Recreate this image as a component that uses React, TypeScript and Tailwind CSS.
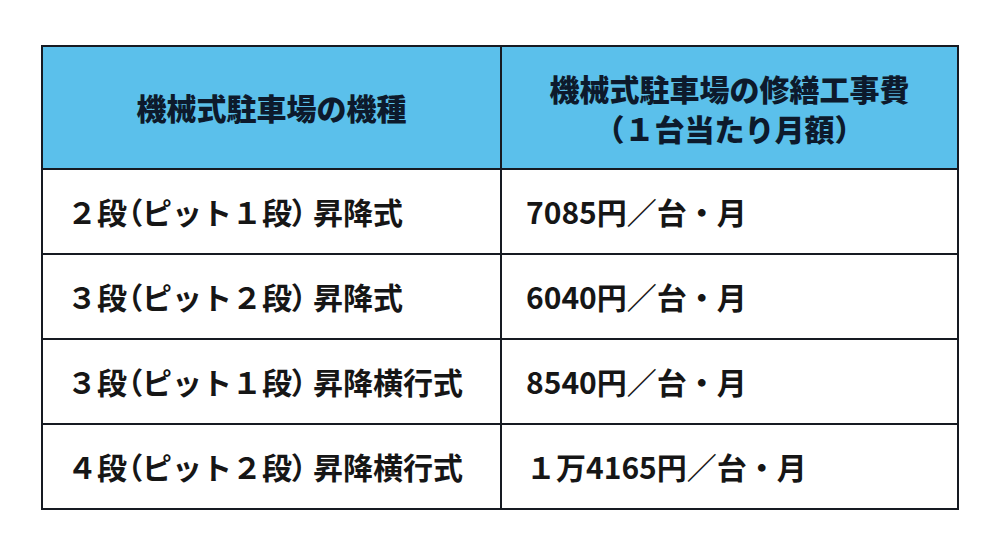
const rows = [
  { pre: "２段", mid: "ピット１段", post: "昇降式", cost: "7085円／台・月" },
  { pre: "３段", mid: "ピット２段", post: "昇降式", cost: "6040円／台・月" },
  { pre: "３段", mid: "ピット１段", post: "昇降横行式", cost: "8540円／台・月" },
  { pre: "４段", mid: "ピット２段", post: "昇降横行式", cost: "１万4165円／台・月" },
];

export default function App() {
  return (
    <div
      className="h-[552px] w-[1000px] bg-white pl-[41px] pt-[45px]"
      style={{ fontFamily: '"Noto Sans CJK JP", "Noto Sans", sans-serif' }}
    >
      <div className="w-[918px] border-2 border-[#161a22]">
        <div className="grid h-[121px] grid-cols-[457px_1fr] bg-[#5bc0eb] text-[30px] font-black text-[#0d1a2c]">
          <div className="flex items-center justify-center">機械式駐車場の機種</div>
          <div className="flex flex-col items-center justify-center border-l-2 border-[#161a22] leading-[40px]">
            <span>機械式駐車場の修繕工事費</span>
            <span>（１台当たり月額）</span>
          </div>
        </div>
        {rows.map((r) => (
          <div
            key={r.pre + r.mid + r.post}
            className="grid h-[85px] grid-cols-[457px_1fr] border-t-2 border-[#161a22] text-[30px] font-bold text-[#161616]"
          >
            <div className="flex items-center pl-[24px]">
              <span>
                {r.pre}
                <span className="[font-feature-settings:'palt']">（</span>
                {r.mid}
                <span className="[font-feature-settings:'palt']">）</span>
                <span className="ml-[6px]">{r.post}</span>
              </span>
            </div>
            <div className="flex items-center border-l-2 border-[#161a22] pl-[24px]">
              {r.cost}
            </div>
          </div>
        ))}
      </div>
    </div>
  );
}
